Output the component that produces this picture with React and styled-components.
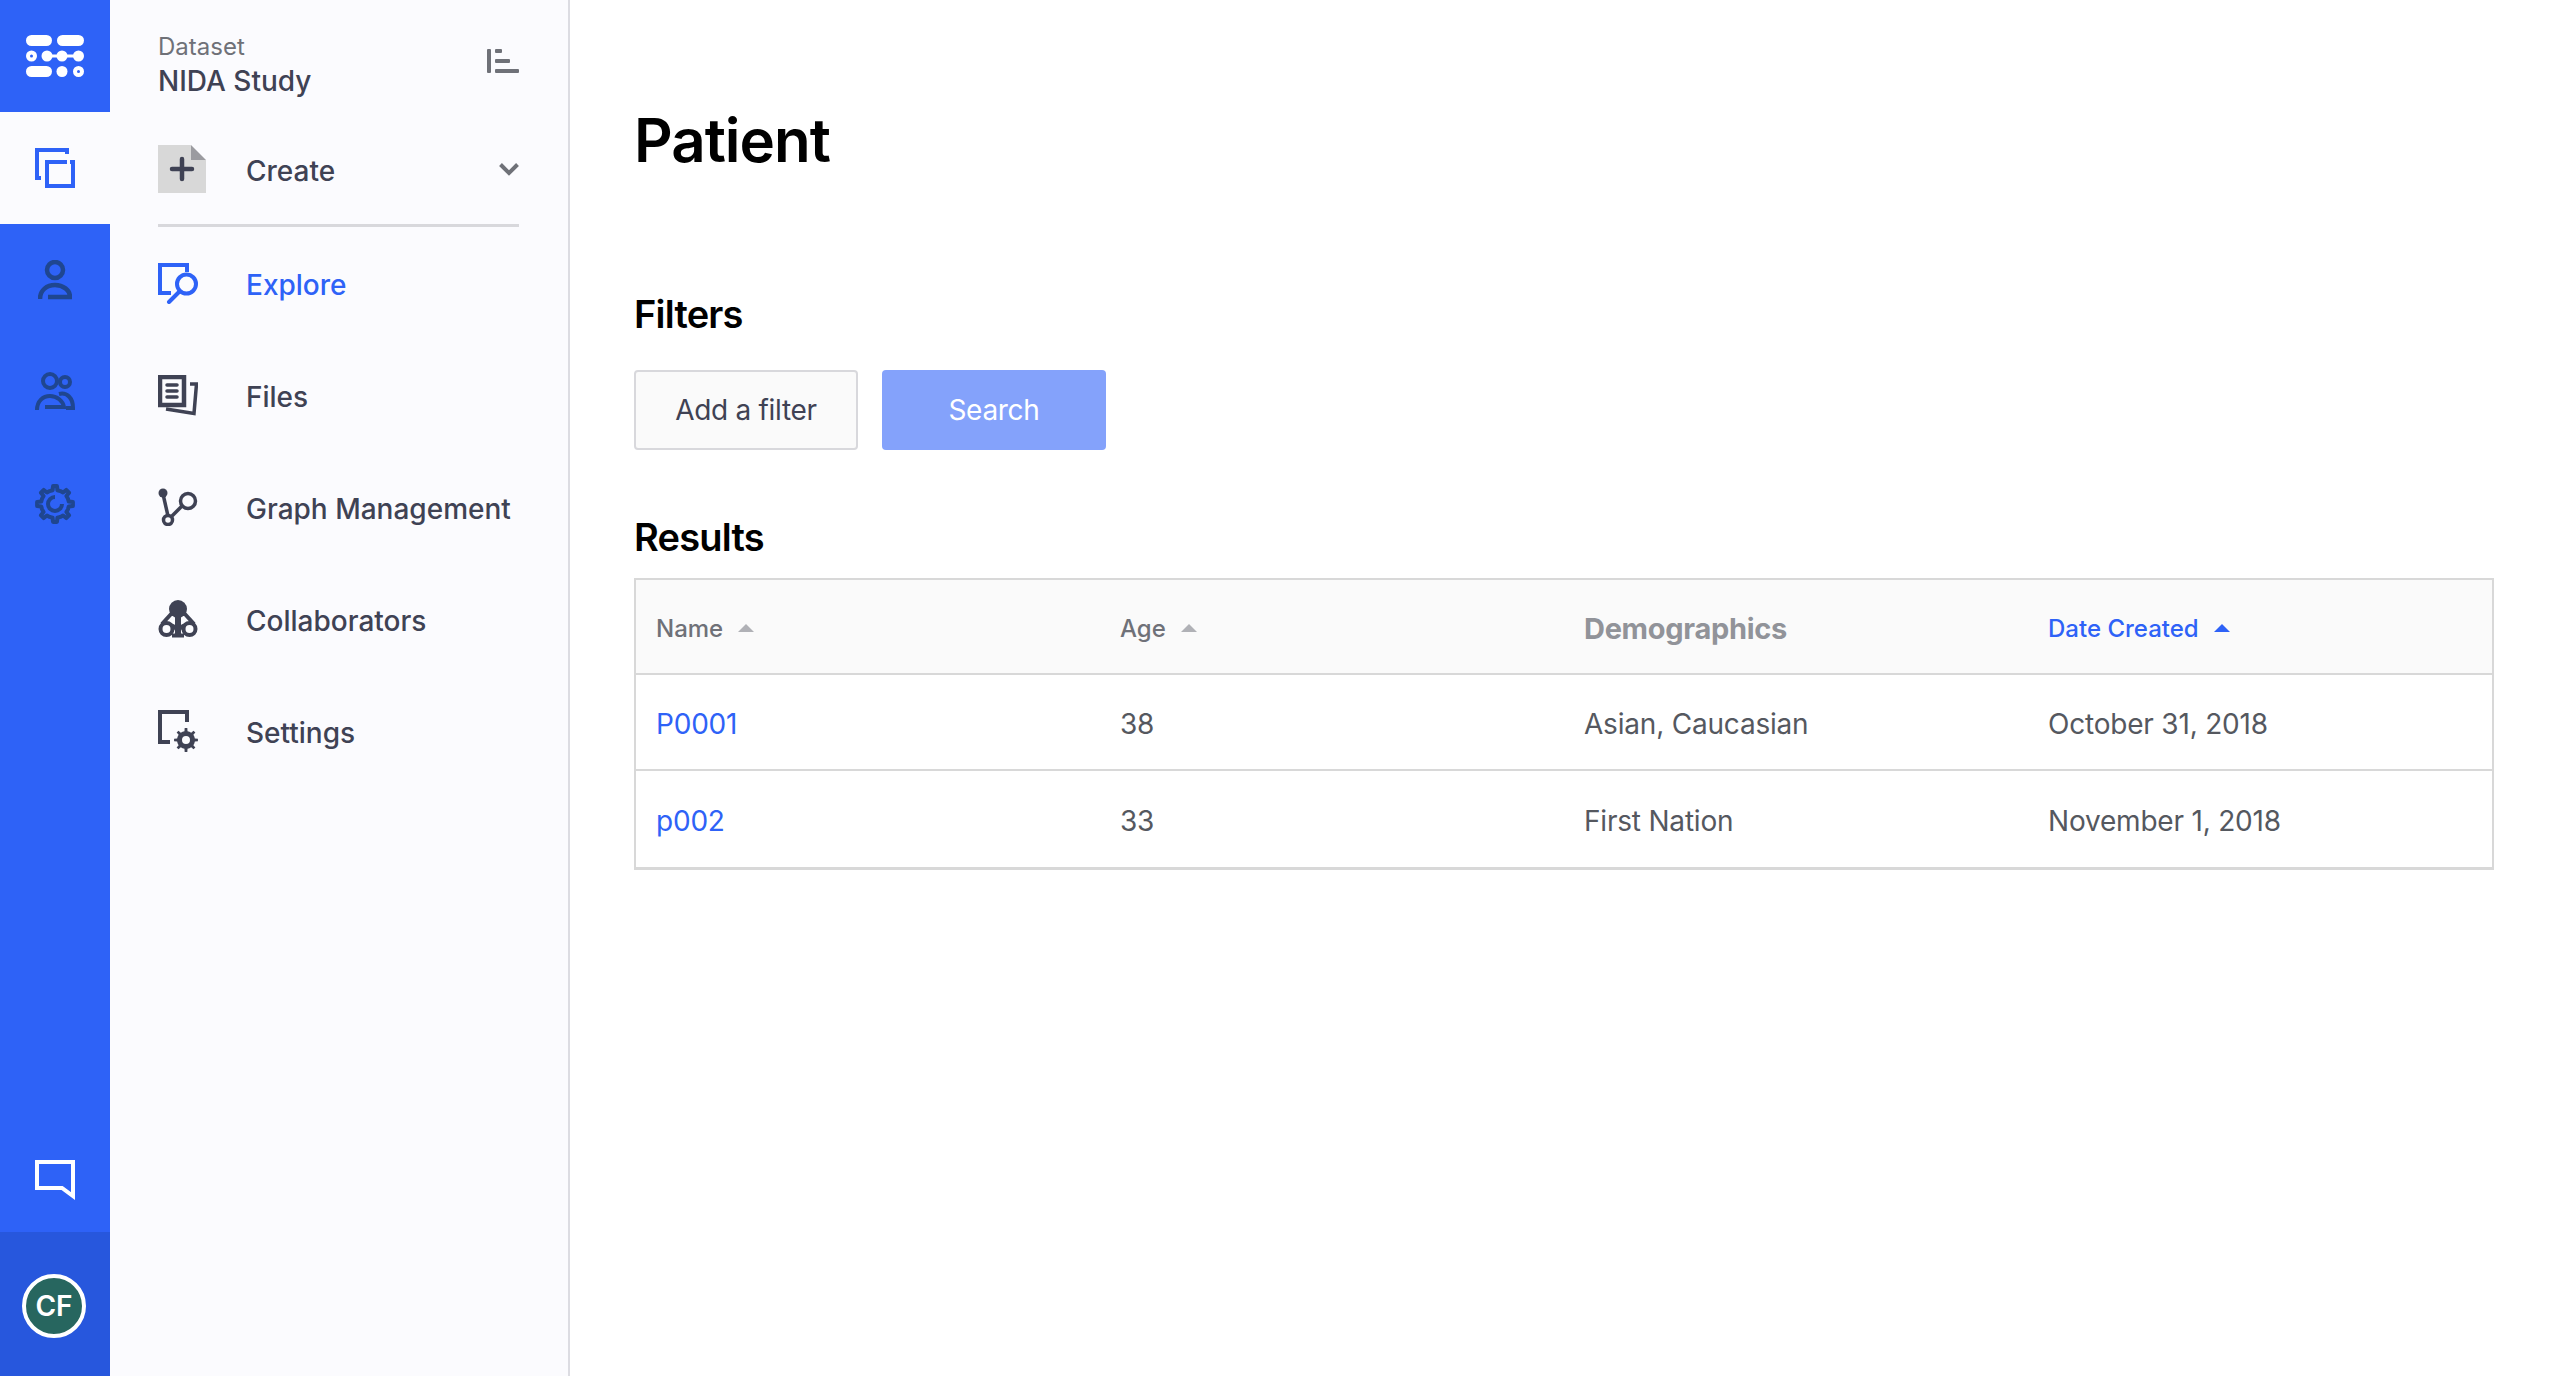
import styled, { createGlobalStyle } from 'styled-components';

const GlobalStyle = createGlobalStyle`
html, body {
  margin: 0;
  padding: 0;
  background: #fff;
  font-family: Inter, "Liberation Sans", sans-serif;
}
* { box-sizing: border-box; }
`;

const Page = styled.div`
display: flex;
height: 1376px;
overflow: hidden;
`;

const Rail = styled.nav`
width: 110px;
flex: none;
display: flex;
flex-direction: column;
background: #2e62f7;
`;

const RailItem = styled.div`
height: 112px;
padding-top: ${p => p.$shift || 0}px;
display: flex;
align-items: center;
justify-content: center;
background: ${p => (p.$active ? '#fbfbfe' : 'transparent')};
`;

const RailSpacer = styled.div`
flex: 1;
`;

const RailAccount = styled.div`
height: 144px;
padding: 4px 2px 0 0;
display: flex;
align-items: center;
justify-content: center;
background: #2757dd;
`;

const Avatar = styled.div`
width: 64px;
height: 64px;
border-radius: 50%;
border: 4px solid #fff;
background: #27665f;
color: #fff;
font-size: 28px;
font-weight: 600;
display: flex;
align-items: center;
justify-content: center;
`;

const Sidebar = styled.aside`
width: 460px;
flex: none;
background: #fbfbfe;
border-right: 2px solid #dcdce2;
`;

const SidebarHead = styled.div`
height: 112px;
padding: 20px 49px 0 48px;
display: flex;
align-items: center;
justify-content: space-between;
`;

const DatasetLabel = styled.div`
font-size: 24px;
line-height: 30px;
color: #6f7178;
`;

const DatasetName = styled.div`
font-size: 28px;
line-height: 38px;
font-weight: 500;
color: #3f4254;
`;

const CollapseSlot = styled.span`
display: flex;
margin-bottom: 10px;
`;

const NavList = styled.div`
margin-top: 2px;
display: flex;
flex-direction: column;
`;

const NavRow = styled.div`
height: ${p => (p.$ruled ? '113px' : '112px')};
margin: 0 49px 0 48px;
display: flex;
align-items: center;
gap: 40px;
font-size: 28px;
font-weight: 500;
color: ${p => (p.$active ? '#2e62f7' : '#3f4254')};
border-bottom: ${p => (p.$ruled ? '3px solid #d8d8dc' : '0')};
`;

const NavIcon = styled.span`
width: 48px;
flex: none;
display: flex;
`;

const NavText = styled.span`
flex: 1;
padding-top: 4px;
white-space: nowrap;
`;

const Main = styled.main`
flex: 1;
min-width: 0;
padding: 0 62px 0 64px;
`;

const Title = styled.h1`
margin: 0;
padding-top: 100px;
font-size: 60px;
line-height: 80px;
font-weight: 600;
letter-spacing: -1px;
color: #000;
`;

const SectionTitle = styled.h2`
margin: ${p => p.$top}px 0 0;
font-size: 38px;
line-height: 48px;
font-weight: 600;
letter-spacing: -0.8px;
color: #000;
`;

const FilterBar = styled.div`
margin-top: 32px;
display: flex;
gap: 24px;
`;

const Button = styled.button`
width: 224px;
height: 80px;
border-radius: 4px;
font: 400 28px Inter, sans-serif;
letter-spacing: -0.3px;
color: ${p => (p.$primary ? '#fff' : '#3f4254')};
background: ${p => (p.$primary ? '#84a2fb' : '#fafafa')};
border: ${p => (p.$primary ? '0' : '2px solid #d8d8dc')};
`;

const Table = styled.div`
margin-top: 17px;
border: 2px solid #d8d8d8;
border-bottom-width: 3px;
`;

const Row = styled.div`
display: grid;
grid-template-columns: repeat(3, 464px) 1fr;
height: ${p => (p.$head ? '95px' : '96px')};
align-items: center;
padding-left: 20px;
background: ${p => (p.$head ? '#fafafa' : '#fff')};
border-bottom: ${p => (p.$last ? '0' : '2px solid #d8d8d8')};
`;

const HeadCell = styled.div`
display: flex;
align-items: center;
gap: 15px;
padding-top: 3px;
font-size: ${p => (p.$big ? '29px' : '24px')};
font-weight: ${p => (p.$big ? 700 : 500)};
letter-spacing: ${p => (p.$big ? '-0.3px' : '0')};
color: ${p => (p.$active ? '#2e62f7' : p.$big ? '#919399' : '#6f7178')};
`;

const SortArrow = styled.span`
width: 0;
height: 0;
border-left: 8px solid transparent;
border-right: 8px solid transparent;
border-bottom: 8px solid ${p => (p.$active ? '#2e62f7' : '#b0b1b6')};
`;

const Cell = styled.div`
padding-top: 3px;
font-size: 28px;
letter-spacing: -0.2px;
color: ${p => (p.$link ? '#2e62f7' : '#55585f')};
`;

const gearPath = (cx, cy, r1, r2, n) => {
  let d = '';
  const step = (Math.PI * 2) / n;
  for (let i = 0; i < n; i++) {
    const a = i * step;
    const pts = [
      [r1, a - step * 0.5],
      [r1, a - step * 0.22],
      [r2, a - step * 0.14],
      [r2, a + step * 0.14],
      [r1, a + step * 0.22],
    ];
    pts.forEach(([r, t], j) => {
      const x = (cx + r * Math.sin(t)).toFixed(2);
      const y = (cy - r * Math.cos(t)).toFixed(2);
      d += `${i === 0 && j === 0 ? 'M' : 'L'}${x} ${y} `;
    });
  }
  return d + 'Z';
};

const Logo = () => (
  <svg width="58" height="42" viewBox="0 0 58 42" fill="#fff">
    <rect x="0" y="0" width="26" height="11" rx="5.5" />
    <rect x="31" y="0" width="27" height="11" rx="5.5" />
    <circle cx="5.5" cy="21" r="3.5" fill="none" stroke="#fff" strokeWidth="4" />
    <circle cx="21" cy="21" r="5.5" />
    <circle cx="36" cy="21" r="5.5" />
    <circle cx="52.5" cy="21" r="5.5" />
    <rect x="20" y="19.5" width="33" height="3" />
    <rect x="0" y="31" width="26" height="11" rx="5.5" />
    <circle cx="36" cy="36.5" r="5.5" />
    <circle cx="52.5" cy="36.5" r="3.5" fill="none" stroke="#fff" strokeWidth="4" />
  </svg>
);

const RAIL_DARK = '#1f4690';

const CopyIcon = () => (
  <svg width="40" height="40" viewBox="0 0 40 40" fill="none" stroke="#2e62f7" strokeWidth="4">
    <path d="M6 30H2V2H32V6" />
    <path d="M32 14H12V38H38V14H35" />
  </svg>
);

const UserIcon = () => (
  <svg width="34" height="41" viewBox="0 0 34 41" fill="none" stroke={RAIL_DARK} strokeWidth="4.5">
    <circle cx="17" cy="10" r="8" />
    <path d="M2 39C2 30 9 25 17 25C25 25 32 30 32 37H10" />
  </svg>
);

const GroupIcon = () => (
  <svg width="40" height="40" viewBox="0 0 40 40" fill="none" stroke={RAIL_DARK} strokeWidth="4">
    <circle cx="15" cy="9" r="7" />
    <circle cx="30" cy="10" r="5" />
    <path d="M2 38C2 29 8 24 15 24C22 24 28 29 29 35H10" />
    <path d="M24 22C32 20 38 26 38 36H31" />
  </svg>
);

const GearIcon = () => (
  <svg width="40" height="40" viewBox="0 0 40 40" fill="none" stroke={RAIL_DARK} strokeWidth="4">
    <path d={gearPath(20, 20, 14, 18, 8)} strokeLinejoin="round" />
    <path d="M20 13A7 7 0 1 0 27 20" />
  </svg>
);

const ChatIcon = () => (
  <svg width="40" height="40" viewBox="0 0 40 40" fill="none" stroke="#fff" strokeWidth="4">
    <path d="M2 2H38V36L27 28H2Z" />
  </svg>
);

const CollapseIcon = () => (
  <svg width="32" height="24" viewBox="0 0 32 24" fill="#6f7178">
    <rect x="0" y="0" width="4" height="24" rx="1" />
    <rect x="8" y="0" width="7" height="4" rx="1" />
    <rect x="8" y="10" width="15" height="4" rx="1" />
    <rect x="8" y="20" width="24" height="4" rx="1" />
  </svg>
);

const CreateIcon = () => (
  <svg width="48" height="48" viewBox="0 0 48 48">
    <path d="M0 0H33V15H48V48H0Z" fill="#d8d8d8" />
    <path d="M33 0L48 15H33Z" fill="#9b9ba0" />
    <path d="M24 14V34M14 24H34" stroke="#3f4254" strokeWidth="4.5" strokeLinecap="round" />
  </svg>
);

const Chevron = () => (
  <svg width="20" height="13" viewBox="0 0 20 13" fill="none" stroke="#6f7178" strokeWidth="4">
    <path d="M1.5 1.5L10 10L18.5 1.5" />
  </svg>
);

const ExploreIcon = () => (
  <svg width="40" height="41" viewBox="0 0 40 41" fill="none" stroke="#2e62f7" strokeWidth="4">
    <path d="M13 30H2V2H29V9" />
    <circle cx="28.5" cy="21" r="9.5" />
    <path d="M21 29L11 39" strokeLinecap="round" />
  </svg>
);

const FilesIcon = () => (
  <svg width="40" height="41" viewBox="0 0 40 41" fill="none" stroke="#3f4254" strokeWidth="4.5">
    <path d="M2 2H26V30H2Z" />
    <path d="M9 10H19M9 16H19M9 22H19" strokeWidth="3.5" strokeLinecap="round" />
    <path d="M32 9H38.5L36 38.5L8 34" strokeWidth="3.5" />
  </svg>
);

const GraphIcon = () => (
  <svg width="40" height="38" viewBox="0 0 40 38" fill="none" stroke="#3f4254" strokeWidth="3.5">
    <circle cx="5" cy="5" r="4.5" fill="#3f4254" stroke="none" />
    <path d="M5 6L10 28" />
    <circle cx="10" cy="32" r="4.5" />
    <circle cx="30" cy="13" r="7.5" />
    <path d="M14 28L24 18" />
  </svg>
);

const CollabIcon = () => (
  <svg width="40" height="38" viewBox="0 0 40 38" fill="none" stroke="#3f4254" strokeWidth="4">
    <circle cx="20" cy="9" r="9" fill="#3f4254" stroke="none" />
    <circle cx="8.5" cy="29" r="6" />
    <circle cx="31.5" cy="29" r="6" />
    <path d="M14 13L4 24M26 13L36 24M14 35.5H26" />
    <path d="M17 16H23V36H17Z" fill="#3f4254" stroke="none" />
    <path d="M13 25Q17 25 18 30M27 25Q23 25 22 30" strokeWidth="3" />
  </svg>
);

const SettingsIcon = () => (
  <svg width="40" height="42" viewBox="0 0 40 42" fill="none" stroke="#3f4254" strokeWidth="4">
    <path d="M12 32H2V2H29V12" />
    <path fillRule="evenodd" fill="#3f4254" stroke="none"
      d={gearPath(28, 30, 9, 12, 8) + ' M28 26A4 4 0 1 0 28 34A4 4 0 1 0 28 26Z'} />
  </svg>
);

function App() {
  return (
    <Page>
      <GlobalStyle />
      <Rail>
        <RailItem><Logo /></RailItem>
        <RailItem $active><CopyIcon /></RailItem>
        <RailItem><UserIcon /></RailItem>
        <RailItem><GroupIcon /></RailItem>
        <RailItem><GearIcon /></RailItem>
        <RailSpacer />
        <RailItem $shift={8}><ChatIcon /></RailItem>
        <RailAccount><Avatar>CF</Avatar></RailAccount>
      </Rail>

      <Sidebar>
        <SidebarHead>
          <div>
            <DatasetLabel>Dataset</DatasetLabel>
            <DatasetName>NIDA Study</DatasetName>
          </div>
          <CollapseSlot><CollapseIcon /></CollapseSlot>
        </SidebarHead>
        <NavList>
          <NavRow $ruled>
            <NavIcon><CreateIcon /></NavIcon>
            <NavText>Create</NavText>
            <Chevron />
          </NavRow>
          <NavRow $active>
            <NavIcon><ExploreIcon /></NavIcon>
            <NavText>Explore</NavText>
          </NavRow>
          <NavRow>
            <NavIcon><FilesIcon /></NavIcon>
            <NavText>Files</NavText>
          </NavRow>
          <NavRow>
            <NavIcon><GraphIcon /></NavIcon>
            <NavText>Graph Management</NavText>
          </NavRow>
          <NavRow>
            <NavIcon><CollabIcon /></NavIcon>
            <NavText>Collaborators</NavText>
          </NavRow>
          <NavRow>
            <NavIcon><SettingsIcon /></NavIcon>
            <NavText>Settings</NavText>
          </NavRow>
        </NavList>
      </Sidebar>

      <Main>
        <Title>Patient</Title>
        <SectionTitle $top={110}>Filters</SectionTitle>
        <FilterBar>
          <Button>Add a filter</Button>
          <Button $primary>Search</Button>
        </FilterBar>
        <SectionTitle $top={63}>Results</SectionTitle>
        <Table>
          <Row $head>
            <HeadCell>Name <SortArrow /></HeadCell>
            <HeadCell>Age <SortArrow /></HeadCell>
            <HeadCell $big>Demographics</HeadCell>
            <HeadCell $active>Date Created <SortArrow $active /></HeadCell>
          </Row>
          <Row>
            <Cell $link>P0001</Cell>
            <Cell>38</Cell>
            <Cell>Asian, Caucasian</Cell>
            <Cell>October 31, 2018</Cell>
          </Row>
          <Row $last>
            <Cell $link>p002</Cell>
            <Cell>33</Cell>
            <Cell>First Nation</Cell>
            <Cell>November 1, 2018</Cell>
          </Row>
        </Table>
      </Main>
    </Page>
  );
}

export default App;
